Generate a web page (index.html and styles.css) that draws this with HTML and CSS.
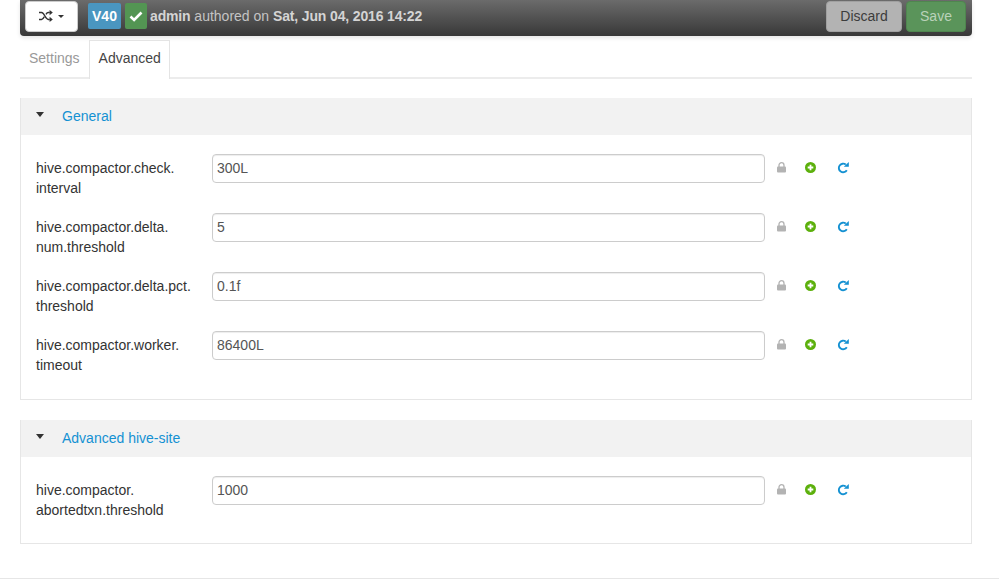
FILE: index.html
```html
<!DOCTYPE html>
<html lang="en">
<head>
  <meta charset="UTF-8">
  <title>Hive Configs</title>
  <link rel="stylesheet" href="styles.css">
</head>
<body>
  <div class="topbar">
    <button class="switch-btn">
      <svg class="shuffle" width="14" height="12" viewBox="0 0 14 12"><path d="M0 2.6h2.6c2.8 0 3.8 6.8 6.6 6.8h1.6M0 9.4h2.6c1.2 0 2-1.2 2.6-2.6M7 4.4c.6-1 1.2-1.8 2.2-1.8h1.6" fill="none" stroke="#333" stroke-width="1.5"/><path d="M10.6 0l3.2 2.6-3.2 2.6zM10.6 6.8l3.2 2.6-3.2 2.6z" fill="#333"/></svg>
      <span class="caret-small"></span>
    </button>
    <span class="badge badge-version">V40</span>
    <span class="badge badge-check">
      <svg width="14" height="11" viewBox="0 0 14 11"><path d="M1.5 5.5l3.6 3.4 7.4-7.4" fill="none" stroke="#fff" stroke-width="2.6"/></svg>
    </span>
    <span class="authored"><b>admin</b> authored on <b>Sat, Jun 04, 2016 14:22</b></span>
    <span class="spacer"></span>
    <button class="btn btn-discard">Discard</button>
    <button class="btn btn-save">Save</button>
  </div>

  <div class="tabs">
    <a class="tab">Settings</a>
    <a class="tab active">Advanced</a>
  </div>

  <section class="panel panel-general">
    <div class="panel-head"><span class="caret"></span><a class="panel-title">General</a></div>
    <div class="panel-body">
      <div class="row">
        <label>hive.compactor.check.<br>interval</label>
        <input type="text" value="300L">
        <div class="actions">
          <svg class="icon" width="9" height="11" viewBox="0 0 9 11"><path d="M2 5V3.2a2.5 2.5 0 0 1 5 0V5" fill="none" stroke="#b3b3b3" stroke-width="1.3"/><rect y="4.6" width="9" height="6" rx="1" fill="#b3b3b3"/></svg>
          <svg class="icon" width="11" height="11" viewBox="0 0 11 11"><circle cx="5.5" cy="5.5" r="5.5" fill="#5cb00c"/><path d="M2.7 5.5h5.6M5.5 2.7v5.6" stroke="#fff" stroke-width="1.8"/></svg>
          <svg class="icon" width="12" height="12" viewBox="0 0 12 12"><path d="M9.8 8.2A4.3 4.3 0 1 1 8.8 2.6" fill="none" stroke="#1491d2" stroke-width="1.9"/><path d="M6.8 4.8h5V0z" fill="#1491d2"/></svg>
        </div>
      </div>
      <div class="row">
        <label>hive.compactor.delta.<br>num.threshold</label>
        <input type="text" value="5">
        <div class="actions">
          <svg class="icon" width="9" height="11" viewBox="0 0 9 11"><path d="M2 5V3.2a2.5 2.5 0 0 1 5 0V5" fill="none" stroke="#b3b3b3" stroke-width="1.3"/><rect y="4.6" width="9" height="6" rx="1" fill="#b3b3b3"/></svg>
          <svg class="icon" width="11" height="11" viewBox="0 0 11 11"><circle cx="5.5" cy="5.5" r="5.5" fill="#5cb00c"/><path d="M2.7 5.5h5.6M5.5 2.7v5.6" stroke="#fff" stroke-width="1.8"/></svg>
          <svg class="icon" width="12" height="12" viewBox="0 0 12 12"><path d="M9.8 8.2A4.3 4.3 0 1 1 8.8 2.6" fill="none" stroke="#1491d2" stroke-width="1.9"/><path d="M6.8 4.8h5V0z" fill="#1491d2"/></svg>
        </div>
      </div>
      <div class="row">
        <label>hive.compactor.delta.pct.<br>threshold</label>
        <input type="text" value="0.1f">
        <div class="actions">
          <svg class="icon" width="9" height="11" viewBox="0 0 9 11"><path d="M2 5V3.2a2.5 2.5 0 0 1 5 0V5" fill="none" stroke="#b3b3b3" stroke-width="1.3"/><rect y="4.6" width="9" height="6" rx="1" fill="#b3b3b3"/></svg>
          <svg class="icon" width="11" height="11" viewBox="0 0 11 11"><circle cx="5.5" cy="5.5" r="5.5" fill="#5cb00c"/><path d="M2.7 5.5h5.6M5.5 2.7v5.6" stroke="#fff" stroke-width="1.8"/></svg>
          <svg class="icon" width="12" height="12" viewBox="0 0 12 12"><path d="M9.8 8.2A4.3 4.3 0 1 1 8.8 2.6" fill="none" stroke="#1491d2" stroke-width="1.9"/><path d="M6.8 4.8h5V0z" fill="#1491d2"/></svg>
        </div>
      </div>
      <div class="row">
        <label>hive.compactor.worker.<br>timeout</label>
        <input type="text" value="86400L">
        <div class="actions">
          <svg class="icon" width="9" height="11" viewBox="0 0 9 11"><path d="M2 5V3.2a2.5 2.5 0 0 1 5 0V5" fill="none" stroke="#b3b3b3" stroke-width="1.3"/><rect y="4.6" width="9" height="6" rx="1" fill="#b3b3b3"/></svg>
          <svg class="icon" width="11" height="11" viewBox="0 0 11 11"><circle cx="5.5" cy="5.5" r="5.5" fill="#5cb00c"/><path d="M2.7 5.5h5.6M5.5 2.7v5.6" stroke="#fff" stroke-width="1.8"/></svg>
          <svg class="icon" width="12" height="12" viewBox="0 0 12 12"><path d="M9.8 8.2A4.3 4.3 0 1 1 8.8 2.6" fill="none" stroke="#1491d2" stroke-width="1.9"/><path d="M6.8 4.8h5V0z" fill="#1491d2"/></svg>
        </div>
      </div>
    </div>
  </section>

  <section class="panel panel-site">
    <div class="panel-head"><span class="caret"></span><a class="panel-title">Advanced hive-site</a></div>
    <div class="panel-body">
      <div class="row">
        <label>hive.compactor.<br>abortedtxn.threshold</label>
        <input type="text" value="1000">
        <div class="actions">
          <svg class="icon" width="9" height="11" viewBox="0 0 9 11"><path d="M2 5V3.2a2.5 2.5 0 0 1 5 0V5" fill="none" stroke="#b3b3b3" stroke-width="1.3"/><rect y="4.6" width="9" height="6" rx="1" fill="#b3b3b3"/></svg>
          <svg class="icon" width="11" height="11" viewBox="0 0 11 11"><circle cx="5.5" cy="5.5" r="5.5" fill="#5cb00c"/><path d="M2.7 5.5h5.6M5.5 2.7v5.6" stroke="#fff" stroke-width="1.8"/></svg>
          <svg class="icon" width="12" height="12" viewBox="0 0 12 12"><path d="M9.8 8.2A4.3 4.3 0 1 1 8.8 2.6" fill="none" stroke="#1491d2" stroke-width="1.9"/><path d="M6.8 4.8h5V0z" fill="#1491d2"/></svg>
        </div>
      </div>
    </div>
  </section>

  <div class="page-end"></div>
</body>
</html>
```

FILE: styles.css
```css
html, body {
  height: 582px;
  overflow: hidden;
}
body {
  margin: 0;
  padding: 0 27px 0 20px;
  font-family: "Liberation Sans", Arial, sans-serif;
  font-size: 14px;
  color: #333;
  background: #fff;
}
.topbar {
  display: flex;
  align-items: center;
  height: 36px;
  padding: 0 5px 4px 5px;
  box-sizing: border-box;
  background: linear-gradient(to bottom, #6b6b6b, #383838);
  border-radius: 0 0 4px 4px;
  box-shadow: 0 2px 4px rgba(0, 0, 0, 0.1);
}
.switch-btn {
  display: flex;
  align-items: center;
  justify-content: center;
  gap: 5px;
  width: 53px;
  height: 31px;
  margin-right: 10px;
  padding: 0;
  background: #fff;
  border: 1px solid #ccc;
  border-radius: 4px;
}
.caret-small {
  border-top: 3px solid #333;
  border-left: 3px solid transparent;
  border-right: 3px solid transparent;
}
.badge {
  display: flex;
  align-items: center;
  justify-content: center;
  height: 26px;
  border-radius: 2px;
  color: #fff;
}
.badge-version {
  width: 33px;
  margin-right: 4px;
  background: #4a96c0;
  font-weight: bold;
}
.badge-check {
  width: 22px;
  margin-right: 4px;
  background: #539553;
}
.authored {
  margin-left: -1px;
  color: #c4c4c4;
}
.authored b {
  color: #d4d4d4;
  letter-spacing: -0.15px;
}
.spacer {
  flex: 1;
}
.btn {
  height: 31px;
  padding: 0;
  font-family: inherit;
  font-size: 14px;
  border-radius: 4px;
}
.btn-discard {
  width: 76px;
  margin-right: 4px;
  background: #b3b3b3;
  border: 1px solid #a0a0a0;
  color: #3c3c3c;
}
.btn-save {
  width: 60px;
  margin-right: 1px;
  background: #5a945a;
  border: 1px solid #4f864f;
  color: #b9d2b9;
}
.tabs {
  display: flex;
  height: 38px;
  margin-top: 4px;
  padding-left: 0;
  border-bottom: 2px solid #ececec;
  box-sizing: border-box;
  height: 39px;
}
.tab {
  padding: 10px 9px 0;
  color: #999;
}
.tab.active {
  height: 39px;
  box-sizing: border-box;
  padding: 9px 8px 0 9px;
  color: #444;
  background: #fff;
  border: 1px solid #e4e4e4;
  border-bottom: 0;
}
.panel {
  border: 1px solid #e6e6e6;
  border-top: 0;
}
.panel-general {
  margin-top: 19px;
}
.panel-site {
  margin-top: 20px;
}
.panel-head {
  display: flex;
  align-items: center;
  height: 37px;
  padding-bottom: 2px;
  box-sizing: border-box;
  background: #f2f2f2;
}
.caret {
  width: 0;
  height: 0;
  margin: -2px 18px 0 15px;
  border-top: 5px solid #333;
  border-left: 4px solid transparent;
  border-right: 4px solid transparent;
}
.panel-title {
  color: #1491d2;
}
.panel-body {
  padding: 19px 15px 9px;
}
.panel-site .panel-body {
  padding-bottom: 8px;
}
.row {
  display: flex;
  align-items: flex-start;
  height: 59px;
}
.row label {
  width: 176px;
  line-height: 20px;
  padding-top: 4px;
}
.row input {
  width: 553px;
  height: 29px;
  box-sizing: border-box;
  padding: 0 4px 2px;
  font-family: inherit;
  font-size: 14px;
  color: #555;
  border: 1px solid #ccc;
  border-radius: 4px;
  box-shadow: inset 0 1px 1px rgba(0, 0, 0, 0.075);
}
.actions {
  display: flex;
  align-items: center;
  height: 27px;
  margin-left: 12px;
}
.icon {
  display: block;
}
.actions .icon:nth-child(2) {
  margin-left: 19px;
}
.actions .icon:nth-child(3) {
  margin-left: 21px;
}
.page-end {
  margin: 34px -27px 0 -20px;
  border-top: 1px solid #e6e6e6;
}
```
